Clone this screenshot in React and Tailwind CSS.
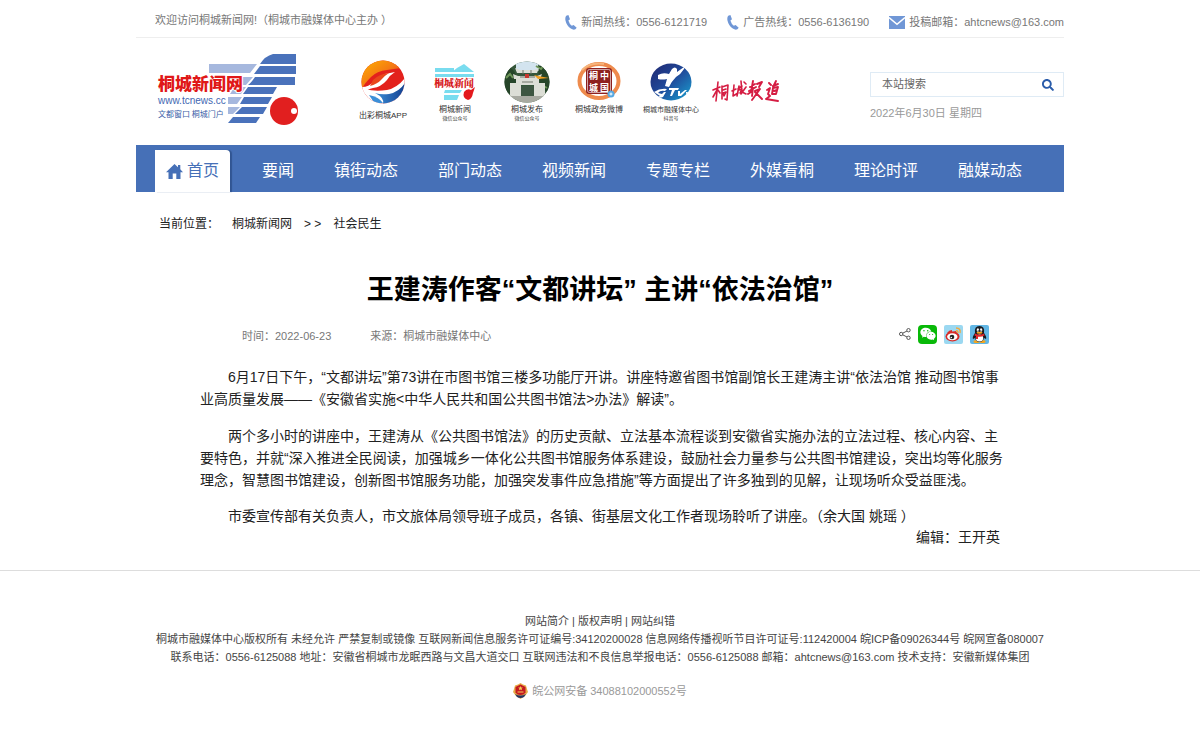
import React from "react";
import { FaSearch, FaWeixin } from "react-icons/fa";

const nav = ["要闻", "镇街动态", "部门动态", "视频新闻", "专题专栏", "外媒看桐", "理论时评", "融媒动态"];

function Phone() {
  return (
    <svg viewBox="0 0 12 15" className="h-[15px] w-3" fill="#7097d6" aria-hidden="true">
      <path d="M1.2.8 3.4.1 5 4.2 3.4 5.6Q4.3 9 6.8 10.8L8.6 10 11.7 12.7 10.4 14.2Q8.5 15.3 5.8 13.6 1.5 10.5.4 5.2 0 2 1.2.8Z" />
    </svg>
  );
}

function Mail() {
  return (
    <svg viewBox="0 0 16 13" className="h-[13px] w-4" aria-hidden="true">
      <rect width="16" height="13" fill="#7097d6" />
      <path d="M0 1.5 8 8.3 16 1.5" fill="none" stroke="#fff" strokeWidth="1.5" />
    </svg>
  );
}

function Home() {
  return (
    <svg viewBox="0 0 17 15" className="h-[15px] w-[17px]" fill="#4670b7" aria-hidden="true">
      <path d="M8.500 0 12 3.200V1H14.300V5.300L17 8.200H14.500V15H10.300V9.500H6.700V15H2.500V8.200H0Z" />
    </svg>
  );
}

const stripes = [
  "M123 9H146V19H110Q115 11 123 9Z",
  "M110 21H146V29H104Z",
  "M105 32H145V40H98Q101 38 105 32Z",
  "M98 42H127L123 49H93Z",
  "M94 52H122L118 59H90Z",
  "M92 62H117L113 69H85Z",
  "M83 72H110L106 78H78Z",
];

function SiteLogo() {
  return (
    <svg viewBox="0 0 160 90" className="h-[90px] w-[160px]" role="img" aria-label="桐城新闻网">
      <path d="M59 19H107L100 28H59ZM90 32H103L96 40H90ZM84 42H96L91 49H80ZM78 52H92L87 59H78ZM78 62H90L83 69H78Z" fill="#a6b8de" />
      {stripes.map((d) => <path key={d} d={d} fill="#4a72bb" />)}
      <circle cx="134" cy="66" r="14" fill="#e11f1f" />
      <circle cx="144" cy="66" r="3" fill="#fff" />
      <text x="8" y="45" fontFamily="Noto Sans CJK SC, sans-serif" fontSize="17" fontWeight="900" fill="#e01818" stroke="#fff" strokeWidth="2" paintOrder="stroke">桐城新闻网</text>
      <text x="8" y="59" fontFamily="Liberation Sans, sans-serif" fontSize="10" fill="#4267b2" stroke="#fff" strokeWidth="2" paintOrder="stroke">www.tcnews.cc</text>
      <text x="8" y="72" fontFamily="Noto Sans CJK SC, sans-serif" fontSize="8" fill="#3c5fa8" stroke="#fff" strokeWidth="2" paintOrder="stroke">文都窗口 桐城门户</text>
    </svg>
  );
}

function AppBadge() {
  return (
    <svg viewBox="0 0 44 44" className="h-11 w-11" aria-hidden="true">
      <defs>
        <linearGradient id="warm" x1="0" y1="0" x2="1" y2="1"><stop offset="0" stopColor="#ffb400" /><stop offset=".5" stopColor="#f47a13" /><stop offset="1" stopColor="#e3201b" /></linearGradient>
        <linearGradient id="cool" x1="0" y1="0" x2="1" y2="0"><stop offset="0" stopColor="#3c8fd8" /><stop offset="1" stopColor="#123f8f" /></linearGradient>
        <clipPath id="disc"><circle cx="22" cy="22" r="21.500" /></clipPath>
      </defs>
      <g clipPath="url(#disc)">
        <rect width="44" height="44" fill="#e3211c" />
        <path d="M0 0H36L40 8 26 10Q16 11 10 17T2 27L0 28Z" fill="url(#warm)" />
        <path d="M1 27Q8 27 12 22T24 14L34 12Q29 15 26 20 20 27 12 28 6 29 4 33L0 31Z" fill="#fff" />
        <path d="M12 20Q18 14 28 13 23 16 20 20 16 24 9 26Z" fill="#e9461b" />
        <path d="M44 18Q36 28 26 30 14 32 4 29L2 36 12 44H44Z" fill="#fff" />
        <path d="M44 23Q38 32 28 34 20 35 14 33 24 38 22 44H44Z" fill="url(#cool)" />
        <path d="M8 35Q18 37 22 43L14 44Z" fill="#3c8fd8" />
      </g>
    </svg>
  );
}

function NewsBadge() {
  return (
    <svg viewBox="0 0 42 38" className="h-[38px] w-[42px]" aria-hidden="true">
      <g fill="#79dcef">
        <path d="M1 5H20V9H1ZM1 11H17V14H1ZM23 5 30 1 40 9H18ZM17 11H40V14H14ZM11 27H28L26 30H10ZM10 32H25L23 37H10Z" />
      </g>
      <text x="0" y="24" fontFamily="Noto Serif CJK SC, Noto Sans CJK SC, sans-serif" fontSize="10" fontWeight="900" fill="#d71920" stroke="#fff" strokeWidth="1" paintOrder="stroke">桐城新闻</text>
      <path d="M30 29Q33 25 37 27L41 24 39 30Q38 36 34 37 28 35 30 29Z" fill="#e3191d" />
    </svg>
  );
}

function GateBadge() {
  return (
    <svg viewBox="0 0 46 42" className="h-[42px] w-[46px]" aria-hidden="true">
      <defs><clipPath id="gate"><ellipse cx="23" cy="21" rx="22.500" ry="20.500" /></clipPath></defs>
      <g clipPath="url(#gate)">
        <rect width="46" height="42" fill="#35563a" />
        <path d="M12 0H36V10H12Z" fill="#d3e4ef" />
        <path d="M0 8Q5 4 9 9T13 20L8 34 0 30ZM34 4Q40 5 46 14V32L36 28Z" fill="#264529" />
        <path d="M2 17 6 13 9 17M32 5 37 8 40 4M38 24 43 27" stroke="#6d9558" strokeWidth="2" fill="none" />
        <path d="M11 7 16 9H30L35 7 33 12H13ZM9 13 14 15H33L38 13 36 18H10ZM12 18H17V38H12ZM30 18H35V38H30ZM17 18H30V24H17ZM6 22H12V37H6ZM35 22H41V37H35Z" fill="#dcded6" />
        <path d="M17 25H30V35H17Z" fill="#3d5641" />
        <path d="M19 9V13M27 9V13M16 16H31M18 21H29" stroke="#70766b" />
        <path d="M4 35H42V42H4Z" fill="#a8aaa1" />
        <path d="M30 14 34 15 45 17 34 18Z" fill="#ef9e20" />
        <path d="M21 13H25V17H21Z" fill="#c7372e" />
      </g>
    </svg>
  );
}

function SealBadge() {
  return (
    <svg viewBox="0 0 44 40" className="h-10 w-11" aria-hidden="true">
      <ellipse cx="22" cy="19" rx="19.500" ry="17" fill="#fff" stroke="#ee8b4d" strokeWidth="4" />
      <path d="M5 8Q13 0 27 2" stroke="#f5b47c" strokeWidth="2" fill="none" />
      <rect x="9" y="6" width="26" height="26" rx="3" fill="#8e211f" />
      <rect x="10.500" y="7.500" width="23" height="23" rx="2" fill="none" stroke="#fff" strokeWidth=".6" />
      <g fontFamily="Noto Sans CJK SC, sans-serif" fontSize="9" fontWeight="700" fill="#fff">
        <text x="12" y="17">桐</text><text x="23" y="17">中</text><text x="12" y="29">城</text><text x="23" y="29">国</text>
      </g>
      <circle cx="34" cy="32" r="3.500" fill="#57a9e2" /><path d="M32.500 32H35.500M34 30.500V33.500" stroke="#fff" />
    </svg>
  );
}

function TvBadge() {
  return (
    <svg viewBox="0 0 42 38" className="h-[38px] w-[42px]" aria-hidden="true">
      <defs>
        <linearGradient id="tv" x1="0" y1="0" x2="1" y2="1"><stop offset="0" stopColor="#20266f" /><stop offset=".5" stopColor="#204b9b" /><stop offset="1" stopColor="#19a5d3" /></linearGradient>
        <clipPath id="globe"><ellipse cx="21" cy="19" rx="20.500" ry="18.500" /></clipPath>
      </defs>
      <g clipPath="url(#globe)">
        <rect width="42" height="38" fill="url(#tv)" />
        <path d="M8 12Q13 9 19 11L22 6Q25 3 27 6L27 9 34 4 34 6Q31 11 26 14 21 19 19 24L15 23 17 16Q12 17 8 16Z" fill="#fff" />
        <path d="M4 29Q10 25 17 26L15 28Q10 27 8 30L12 31 14 29H16L13 34Q8 36 7 34L10 33ZM19 25H29L28 27H25L22 33H20L22 27H19ZM28 28H30L30 31 35 27H37L31 33H28ZM36 29H41V31H36Z" fill="#fff" />
      </g>
    </svg>
  );
}

function Brush() {
  return (
    <svg viewBox="0 0 68 28" className="h-7 w-[68px]" role="img" aria-label="桐城报道" fill="none" stroke="#d51d43" strokeLinecap="round" strokeLinejoin="round">
      <path strokeWidth="1.600" d="M1 12 8 9M6 4 4 23M5 12 1 19M6 12 8 15M10 8 10 21M10 9 16 7 15 22 13 21M11 12 14 11M11 15 14 14 12 18 11 15M20 13 24 11M22 7 21 18 26 15M26 11 30 8M27 8 25 18M27 12 30 11 28 15M29 3 30 14 34 16M34 9 29 16M32 4 34 6" />
      <path strokeWidth="1.900" d="M38 9 43 6M41 3 39 14 36 16M37 13 44 9M45 6 50 4 47 9M43 13 48 11 40 22M43 14 50 21M41 10 40 18M57 5 59 7M55 12 58 10 56 16 58 18 54 21 66 23M61 8 66 6M64 3 61 9M61 10 66 9 64 16 60 16 61 10M62 13 65 12" />
    </svg>
  );
}

const badges = [
  { art: <AppBadge />, name: "出彩桐城APP", sub: "", label: "pt-1.5 text-[8px] leading-[10px]" },
  { art: <NewsBadge />, name: "桐城新闻", sub: "微信公众号", label: "text-[8px] leading-[10px]" },
  { art: <GateBadge />, name: "桐城发布", sub: "微信公众号", label: "text-[8px] leading-[10px]" },
  { art: <SealBadge />, name: "桐城政务微博", sub: "", label: "text-[8px] leading-[10px]" },
  { art: <TvBadge />, name: "桐城市融媒体中心", sub: "抖音号", label: "text-[7px] leading-[10px]" },
];

function ShareIcon() {
  return (
    <svg viewBox="0 0 12 12" className="h-3 w-3" fill="none" stroke="#555" aria-hidden="true">
      <circle cx="2.200" cy="6" r="1.700" /><circle cx="9.500" cy="2.200" r="1.700" /><circle cx="9.500" cy="9.800" r="1.700" /><path d="m3.700 5.200 4.300-2.200m-4.300 3.800 4.300 2.200" />
    </svg>
  );
}

function Weibo() {
  return (
    <svg viewBox="0 0 19 19" className="h-[19px] w-[19px]" aria-hidden="true">
      <rect width="19" height="19" rx="2" fill="#9bd8f1" />
      <ellipse cx="8.500" cy="11.500" rx="7" ry="5" fill="#d92b26" />
      <path d="M3 8Q5 5 8 5L8 7 12 6 13 9Z" fill="#d92b26" />
      <ellipse cx="8.300" cy="11.800" rx="5.200" ry="3.500" fill="#fff" />
      <circle cx="8" cy="12" r="2.300" fill="#222" /><circle cx="7.300" cy="12.500" r=".8" fill="#fff" />
      <path d="M12 3Q17 3 16 8M12 6Q14 5 14 8" stroke="#f3a83b" strokeWidth="1.400" fill="none" />
    </svg>
  );
}

function QQ() {
  return (
    <svg viewBox="0 0 19 19" className="h-[19px] w-[19px]" aria-hidden="true">
      <rect width="19" height="19" rx="2" fill="#62b7e5" />
      <ellipse cx="6.500" cy="16.500" rx="3" ry="1.500" fill="#f5a51d" /><ellipse cx="12.500" cy="16.500" rx="3" ry="1.500" fill="#f5a51d" />
      <path d="M5 8Q4 1 9.500 1T14 8Q17 12 16 14L14 13Q13 17 9.500 17T5 13L3 14Q2 12 5 8Z" fill="#191b20" />
      <ellipse cx="9.500" cy="13" rx="3.700" ry="3.500" fill="#fff" />
      <ellipse cx="7.900" cy="5" rx="1.200" ry="1.700" fill="#fff" /><ellipse cx="11.100" cy="5" rx="1.200" ry="1.700" fill="#fff" />
      <circle cx="8.200" cy="5.200" r=".5" /><circle cx="10.800" cy="5.200" r=".5" />
      <ellipse cx="9.500" cy="7.800" rx="3" ry="1" fill="#f5a51d" />
      <path d="M5 8.500Q9.500 11 14 8.500L14.500 10.500Q9.500 13 4.500 10.500ZM6 11H8V14H6Z" fill="#e3272c" />
    </svg>
  );
}

function Police() {
  return (
    <svg viewBox="0 0 15 16" className="h-4 w-[15px]" aria-hidden="true">
      <path d="M7.500 0 10 1.500 13 2.500 14 6 15 9 12 13 7.500 16 3 13 0 9 1 6 2 2.500 5 1.500Z" fill="#e7ae48" />
      <path d="M7.500 1.500 12.500 4V9.500Q11 12 7.500 12T2.500 9.500V4Z" fill="#c41920" />
      <path d="M7.500 3 8.200 4.500 9.800 4.600 8.600 5.700 9 7.200 7.500 6.400 6 7.200 6.400 5.700 5.200 4.600 6.800 4.500ZM4.500 8.500H10.500V9.500H4.500Z" fill="#f5cf58" />
      <path d="M2 11Q7.500 14 13 11L11 14Q7.500 16 4 14Z" fill="#263565" />
    </svg>
  );
}

export default function App() {
  return (
    <div className="bg-white pb-14 font-['Liberation_Sans','Noto_Sans_CJK_SC',sans-serif] text-[11px] text-[#333]" lang="zh-CN">
      <div className="mx-auto max-w-[928px]">
        <header>
          <div className="flex h-[38px] justify-between border-b border-[#eee] pl-[19px] text-[#777]">
            <p className="pt-3 leading-4">欢迎访问桐城新闻网!（桐城市融媒体中心主办 ）</p>
            <div className="flex gap-5 pt-2">
              <span className="flex items-center gap-1"><Phone />新闻热线：0556-6121719</span>
              <span className="flex items-center gap-1"><Phone />广告热线：0556-6136190</span>
              <span className="flex items-center gap-1"><Mail />投稿邮箱：ahtcnews@163.com</span>
            </div>
          </div>
          <div className="flex h-[107px] items-start">
            <a href="#" className="ml-3.5 mt-[7px] block"><SiteLogo /></a>
            <div className="ml-10 mt-[21px] flex items-start gap-1.5">
              {badges.map((b) => (
                <a key={b.name} href="#" className="flex w-[66px] flex-col items-center whitespace-nowrap text-[#333]">
                  <span className="flex h-[46px] items-center">{b.art}</span>
                  <span className={b.label}>{b.name}</span>
                  <span className="text-[5px] leading-[6px]">{b.sub}</span>
                </a>
              ))}
            </div>
            <a href="#" className="ml-2 mt-10 block"><Brush /></a>
            <form className="ml-auto mt-[34px] w-[194px]">
              <div className="flex h-[25px] items-center border border-[#dfebf5] pl-[11px] pr-[9px]">
                <input aria-label="本站搜索" placeholder="本站搜索" className="min-w-0 flex-1 outline-none placeholder:text-[#666]" />
                <button type="button" aria-label="搜索"><FaSearch className="h-3 w-3 text-[#2a5caa]" /></button>
              </div>
              <p className="mt-2 leading-4 text-[#999]">2022年6月30日 星期四</p>
            </form>
          </div>
        </header>
        <nav className="flex h-[47px] items-stretch bg-[#4670b7] pl-[19px] text-[16px] text-white">
          <a href="#" className="mt-[5px] flex w-[75px] items-center justify-center gap-1 rounded-tr bg-white text-[#4670b7] shadow-[2px_0_1px_#315592]"><Home />首页</a>
          <div className="ml-8 flex items-center gap-10 pt-[5px]">
            {nav.map((n) => <a key={n} href="#" className="whitespace-nowrap">{n}</a>)}
          </div>
        </nav>
        <div className="mt-[22px] flex pl-[23px] text-xs leading-5 text-[#222]">
          <span className="w-[73px]">当前位置：</span><a href="#">桐城新闻网</a><span className="px-3">&gt; &gt;</span><a href="#">社会民生</a>
        </div>
        <main className="mx-auto mt-[38px] max-w-[800px]">
          <h1 className="text-center text-[27px] font-bold leading-9 text-black">王建涛作客“文都讲坛” 主讲“依法治馆”</h1>
          <div className="mt-4 flex h-5 items-center pl-[42px] pr-[11px] text-[#777]">
            <p className="flex gap-[39px] pt-1"><span>时间：2022-06-23</span><span>来源：桐城市融媒体中心</span></p>
            <div className="ml-auto flex items-center gap-[7px]">
              <ShareIcon />
              <button type="button" aria-label="微信" className="flex h-[19px] w-[19px] items-center justify-center rounded-sm bg-[#08b908] text-white"><FaWeixin className="h-4 w-4" /></button>
              <button type="button" aria-label="微博"><Weibo /></button>
              <button type="button" aria-label="QQ"><QQ /></button>
            </div>
          </div>
          <article className="-mr-1 mt-[22px] flex flex-col gap-[15px] text-sm leading-[22px] text-[#222]">
            <p className="indent-7">6月17日下午，“文都讲坛”第73讲在市图书馆三楼多功能厅开讲。讲座特邀省图书馆副馆长王建涛主讲“依法治馆 推动图书馆事业高质量发展——《安徽省实施&lt;中华人民共和国公共图书馆法&gt;办法》解读”。</p>
            <p className="indent-7">两个多小时的讲座中，王建涛从《公共图书馆法》的历史贡献、立法基本流程谈到安徽省实施办法的立法过程、核心内容、主要特色，并就“深入推进全民阅读，加强城乡一体化公共图书馆服务体系建设，鼓励社会力量参与公共图书馆建设，突出均等化服务理念，智慧图书馆建设，创新图书馆服务功能，加强突发事件应急措施”等方面提出了许多独到的见解，让现场听众受益匪浅。</p>
            <div className="leading-[21px]">
              <p className="indent-7">市委宣传部有关负责人，市文旅体局领导班子成员，各镇、街基层文化工作者现场聆听了讲座。（余大国 姚瑶 ）</p>
              <p className="pr-1 text-right">编辑：王开英</p>
            </div>
          </article>
        </main>
      </div>
      <footer className="mt-[22px] border-t border-[#ddd] pt-[41px] text-center leading-[18px] text-[#444]">
        <p><a href="#">网站简介</a> | <a href="#">版权声明</a> | <a href="#">网站纠错</a></p>
        <p>桐城市融媒体中心版权所有 未经允许 严禁复制或镜像 互联网新闻信息服务许可证编号:34120200028 信息网络传播视听节目许可证号:112420004 皖ICP备09026344号 皖网宣备080007</p>
        <p>联系电话：0556-6125088 地址：安徽省桐城市龙眠西路与文昌大道交口 互联网违法和不良信息举报电话：0556-6125088 邮箱：ahtcnews@163.com 技术支持：安徽新媒体集团</p>
        <a href="#" className="mt-4 flex items-center justify-center gap-1 text-[#999]"><Police />皖公网安备 34088102000552号</a>
      </footer>
    </div>
  );
}
